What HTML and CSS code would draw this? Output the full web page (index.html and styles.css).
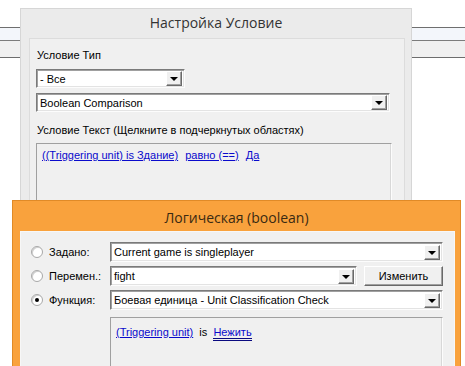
FILE: index.html
```html
<!DOCTYPE html>
<html>
    <head>
        <meta charset="utf-8">
        <link rel="stylesheet" href="styles.css">
    </head>

    <body>

        <div class="backdrop">
            <div class="backdrop-band"></div>
            <div class="backdrop-gray"></div>
        </div>

        <div class="window back-window">
            <div class="title">Настройка Условие</div>
            <div class="panel back-panel">
                <div class="label first-label">Условие Тип</div>
                <div class="combo combo-type"><span class="value">- Все</span><span class="drop"></span></div>
                <div class="combo combo-wide"><span class="value">Boolean Comparison</span><span class="drop"></span></div>
                <div class="label second-label">Условие Текст (Щелкните в подчеркнутых областях)</div>
                <div class="text-box back-box">
                    <a class="link">((Triggering unit) is Здание)</a>
                    <a class="link">равно (==)</a>
                    <a class="link">Да</a>
                </div>
            </div>
        </div>

        <div class="window front-window">
            <div class="title">Логическая (boolean)</div>
            <div class="panel front-panel">
                <div class="choice"><span class="radio"></span>Задано:</div>
                <div class="combo"><span class="value">Current game is singleplayer</span><span class="drop"></span></div>

                <div class="choice"><span class="radio"></span>Перемен.:</div>
                <div class="var-row">
                    <div class="combo combo-var"><span class="value">fight</span><span class="drop"></span></div>
                    <button class="button">Изменить</button>
                </div>

                <div class="choice"><span class="radio checked"></span>Функция:</div>
                <div class="combo"><span class="value">Боевая единица - Unit Classification Check</span><span class="drop"></span></div>

                <div></div>
                <div class="text-box front-box">
                    <a class="link">(Triggering unit)</a>&nbsp; is &nbsp;<a class="link current">Нежить</a>
                </div>
            </div>
        </div>

    </body>
</html>
```

FILE: styles.css
```css
body
{
    margin: 0; background: white; overflow: hidden;
    height: 366px; position: relative;
    font-family: "Liberation Sans", Arial, sans-serif; font-size: 11px; color: black;
}

/* window lying behind both dialogs */
.backdrop { margin-top: 27px; border-top: 1px solid #6f6f6f; }
.backdrop-band { height: 12px; background: #f3f6fb; border-bottom: 1px solid #7c7c7c; }
.backdrop-gray { height: 16px; background: #f0f0f0; border-bottom: 1px solid #6d6d6d; }

.window { position: absolute; box-sizing: border-box; }
.title { text-align: center; font-family: "Open Sans", sans-serif; font-size: 14px; }

.back-window
{
    left: 20px; top: 8px; width: 392px; height: 420px;
    background: #ebebeb; border: 1px solid #d6d6d6;
}
.back-window .title { height: 29px; line-height: 27px; color: #333; }

.front-window
{
    left: 12px; top: 200px; width: 449px; height: 200px;
    background: #f9a23d; border: 1px solid #e08a27;
}
.front-window .title { height: 30px; line-height: 33px; color: #3a2a12; }

.panel { background: #f0f0f0; box-sizing: border-box; }
.back-panel
{
    margin: 0 6px 0 8px; height: 400px;
    border: 1px solid #dcdcdc; padding: 0 6px;
}
.front-panel
{
    margin: 0 5px 0 7px; height: 200px;
    border: 1px solid #f7f7f7; padding: 10px 11px 0 0;
    display: grid; grid-template-columns: 89px 1fr; grid-auto-rows: 20px;
    row-gap: 4px; align-items: center; align-content: start;
}

.label { line-height: 13px; padding-left: 1px; }
.first-label { padding-top: 10px; margin-bottom: 7px; }
.second-label { margin-top: 12px; margin-bottom: 6px; }

.combo
{
    display: flex; align-items: center; box-sizing: border-box;
    height: 20px; background: white;
    border: 1px solid; border-color: #7a7a7a #fcfcfc #fcfcfc #7a7a7a;
    box-shadow: inset 1px 1px #a0a0a0, inset -1px -1px #e3e3e3;
}
.back-panel .combo { height: 19px; }
.combo-type { width: 149px; }
.combo-wide { width: 354px; margin-top: 5px; }
.combo-var { width: 247px; }
.value { flex: 1; padding-left: 3px; white-space: nowrap; overflow: hidden; }
.drop
{
    width: 16px; height: 15px; margin-right: 2px; box-sizing: border-box;
    background: #f0f0f0; position: relative;
    border: 1px solid; border-color: #ffffff #696969 #696969 #ffffff;
    box-shadow: inset -1px -1px #a0a0a0;
}
.drop::after
{
    content: ""; position: absolute; left: 3px; top: 5px;
    border-left: 4px solid transparent; border-right: 4px solid transparent;
    border-top: 4px solid black;
}

.text-box
{
    box-sizing: border-box; background: #f0f0f0;
    border: 1px solid; border-color: #a0a0a0 #fcfcfc #fcfcfc #a0a0a0;
    box-shadow: inset -1px -1px #d8d8d8;
}
.back-box { width: 356px; height: 200px; padding: 5px 0 0 5px; }
.back-box .link { margin-right: 4px; }
.front-box { height: 80px; margin-top: 3px; padding: 8px 0 0 5px; align-self: start; }

.link { color: #0a0acc; text-decoration: underline; }
.current { text-decoration: none; border-bottom: 3px double #0a0a80; }

.choice { display: flex; align-items: center; padding-left: 10px; }
.radio
{
    width: 12px; height: 12px; box-sizing: border-box; border-radius: 50%;
    margin-right: 6px; position: relative; background: white;
    border: 1px solid #a8a8a8; box-shadow: inset 1px 1px #d0d0d0;
}
.checked::after
{
    content: ""; position: absolute; left: 3px; top: 3px;
    width: 4px; height: 4px; border-radius: 50%; background: black;
}

.var-row { display: flex; gap: 7px; }
.button
{
    width: 79px; height: 20px; padding: 0;
    font-family: "Liberation Sans", Arial, sans-serif; font-size: 11px; color: black;
    background: #f0f0f0;
    border: 1px solid; border-color: #ffffff #696969 #696969 #ffffff;
    box-shadow: inset -1px -1px #a0a0a0;
}
```
